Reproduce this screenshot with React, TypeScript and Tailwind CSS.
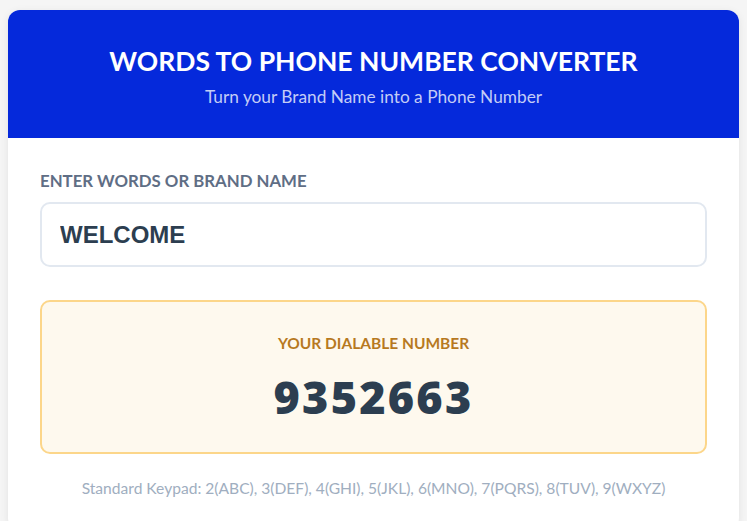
import React, { useState } from "react";

const keypad: Record<string, string> = {
  A: "2", B: "2", C: "2", D: "3", E: "3", F: "3", G: "4", H: "4", I: "4",
  J: "5", K: "5", L: "5", M: "6", N: "6", O: "6", P: "7", Q: "7", R: "7", S: "7",
  T: "8", U: "8", V: "8", W: "9", X: "9", Y: "9", Z: "9",
};

function toDigits(text: string) {
  return text
    .toUpperCase()
    .split("")
    .map((c) => keypad[c] ?? (/[0-9]/.test(c) ? c : ""))
    .join("");
}

const ui = { fontFamily: "Lato, 'Open Sans', sans-serif" };

export default function App() {
  const [value, setValue] = useState("WELCOME");
  return (
    <div className="min-h-screen bg-[#f5f5f5] px-2 pt-[10px]" style={ui}>
      <div className="overflow-hidden rounded-xl bg-white shadow-[0_2px_8px_rgba(0,0,0,0.08)]">
        <div className="bg-[#0529db] px-8 pt-[34px] pb-[30px] text-center">
          <h1 className="text-[26.5px] leading-[34px] font-bold text-white">
            WORDS TO PHONE NUMBER CONVERTER
          </h1>
          <p className="mt-[8px] text-[17.3px] leading-[22px] text-[#c3ccf6]">
            Turn your Brand Name into a Phone Number
          </p>
        </div>
        <div className="px-8 pt-[33px] pb-8">
          <label className="block text-[16.8px] leading-5 font-bold text-[#5f6e85]">
            ENTER WORDS OR BRAND NAME
          </label>
          <input
            value={value}
            onChange={(e) => setValue(e.target.value)}
            className="mt-[11px] block h-[65px] w-full rounded-[10px] border-2 border-[#e2e8f0] px-[18px] text-[24px] font-bold text-[#2c3e50] outline-none"
            style={{ fontFamily: "'Liberation Sans', Arial, sans-serif" }}
          />
          <div className="mt-[33px] rounded-[10px] border-2 border-[#fcd68a] bg-[#fef9ee] px-6 pt-[31px] pb-[27px] text-center">
            <div className="text-[15.5px] leading-5 font-bold text-[#b7791f]">
              YOUR DIALABLE NUMBER
            </div>
            <div className="mt-[16px] font-['Open_Sans',sans-serif] text-[45px] leading-[56px] font-extrabold tracking-[2.2px] text-[#2c3e50]">
              {toDigits(value)}
            </div>
          </div>
          <p className="mt-[24px] text-center text-[15.6px] leading-5 text-[#a0aec0]">
            Standard Keypad: 2(ABC), 3(DEF), 4(GHI), 5(JKL), 6(MNO), 7(PQRS), 8(TUV), 9(WXYZ)
          </p>
        </div>
      </div>
    </div>
  );
}
